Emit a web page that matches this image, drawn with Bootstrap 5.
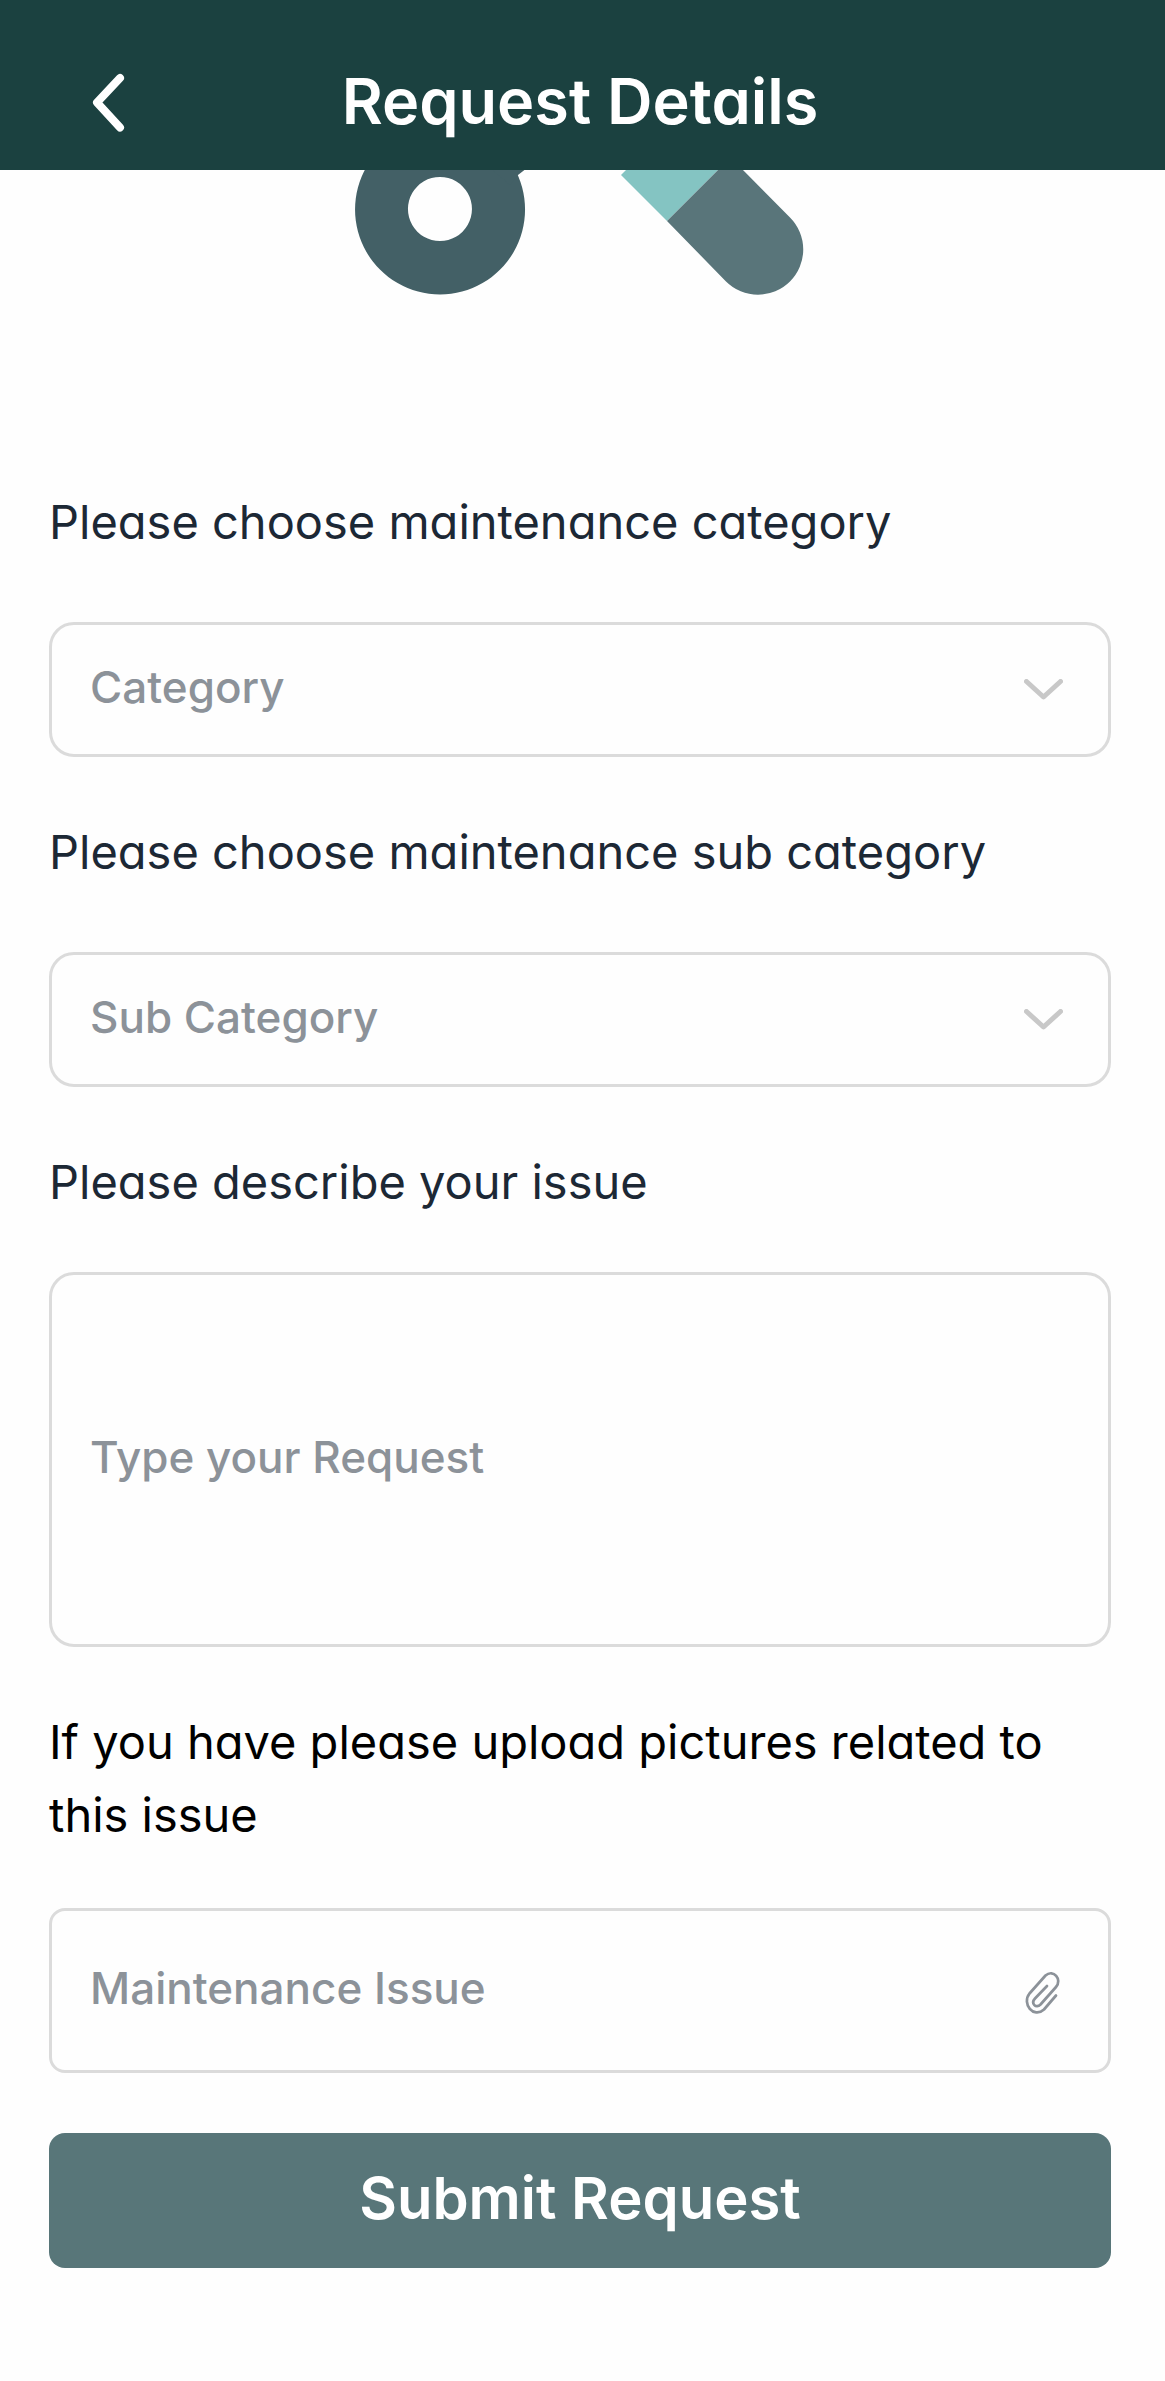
<!DOCTYPE html>
<html lang="en">
<head>
<meta charset="utf-8">
<meta name="viewport" content="width=device-width, initial-scale=1">
<title>Request Details</title>
<link href="https://cdn.jsdelivr.net/npm/bootstrap@5.3.0/dist/css/bootstrap.min.css" rel="stylesheet">
<style>
  body { font-family: Inter, "Open Sans", sans-serif; font-feature-settings: "cv11" 1; background: #fefefe; color: #1c2835; }
  .page-gutter { padding-left: 49px; padding-right: 54px; }
  .app-header { background: #1b4140; color: #fff; padding-top: 36px; padding-bottom: 4px; }
  .header-side { width: 120px; height: 130px; padding: 4px 0 0; }
  .header-title { font-size: 63px; line-height: 126px; font-weight: 600; }
  .illustration { margin-bottom: 190px; }
  .field-label { font-size: 47px; line-height: 73px; margin-bottom: 64px; }
  .label-describe { margin-bottom: 54px; }
  .label-upload { margin-bottom: 57px; color: #000; }
  .field-block { margin-bottom: 58px; }
  .field-box.form-control, .field-box.form-select {
    border: 3px solid #dbdbdb; border-radius: 25px; background: #fefefe;
    padding: 0 120px 6px 38px; height: 135px;
    font-size: 44px; line-height: 60px; font-weight: 500; color: #8c9299;
  }
  .field-box.form-control::placeholder { color: #8c9299; opacity: 1; }
  .field-box.request-text { height: 375px; padding-top: 152px; padding-right: 38px; resize: none; }
  .field-box.upload-text { height: 165px; border-radius: 16px; }
  .field-icon { right: 48px; pointer-events: none; }
  .clip-btn { right: 35px; }
  .submit-btn.btn { height: 135px; margin-top: 60px; border: 0; border-radius: 16px; background: #587679; color: #fff; font-size: 58px; line-height: 60px; font-weight: 600; padding: 0 0 6px; }
</style>
</head>
<body>
<header class="app-header page-gutter d-flex align-items-center justify-content-between">
  <button type="button" class="header-side btn border-0 d-flex align-items-center justify-content-center" aria-label="Back">
    <svg width="34" height="60" viewBox="0 0 34 60" fill="none" stroke="#fff" stroke-width="8" stroke-linecap="round" stroke-linejoin="round"><path d="M28 5 5 29.500 28 54.500"/></svg>
  </button>
  <h1 class="header-title m-0">Request Details</h1>
  <span class="header-side"></span>
</header>

<main class="page-gutter pb-5">
  <div class="illustration">
    <svg class="d-block mx-auto" width="450" height="125" viewBox="0 0 450 125" aria-hidden="true">
      <path fill="#436066" fill-rule="evenodd" d="M85-45.500a85 85 0 1 0 .1 0zM85 7a32 32 0 1 1-.1 0z"/>
      <path fill="#436066" d="M135-2h37l-9 7-8 10z"/>
      <path fill="#84c4c2" d="M266 5l7-7h92l-53 53z"/>
      <path fill="#59757a" d="M312 51l53-53h21L435 47.500A45 45 0 0 1 371 111.500z"/>
    </svg>
  </div>

  <form>
    <div class="field-block">
      <label class="field-label d-block" for="category">Please choose maintenance category</label>
      <div class="position-relative d-flex align-items-center">
        <select class="form-select field-box" id="category"><option>Category</option></select>
        <svg class="field-icon position-absolute" width="39" height="21" viewBox="0 0 39 21" fill="none" stroke="#c8c8c8" stroke-width="5" stroke-linecap="round" stroke-linejoin="round"><path d="M2.500 2.500 19.500 18 36.500 2.500"/></svg>
      </div>
    </div>
    <div class="field-block">
      <label class="field-label d-block" for="subcategory">Please choose maintenance sub category</label>
      <div class="position-relative d-flex align-items-center">
        <select class="form-select field-box" id="subcategory"><option>Sub Category</option></select>
        <svg class="field-icon position-absolute" width="39" height="21" viewBox="0 0 39 21" fill="none" stroke="#c8c8c8" stroke-width="5" stroke-linecap="round" stroke-linejoin="round"><path d="M2.500 2.500 19.500 18 36.500 2.500"/></svg>
      </div>
    </div>
    <div class="field-block">
      <label class="field-label label-describe d-block" for="request">Please describe your issue</label>
      <textarea class="form-control field-box request-text d-block" id="request" placeholder="Type your Request"></textarea>
    </div>
    <label class="field-label label-upload d-block" for="upload">If you have please upload pictures related to this issue</label>
    <div class="position-relative d-flex align-items-center">
      <input class="form-control field-box upload-text" id="upload" type="text" placeholder="Maintenance Issue">
      <button type="button" class="clip-btn btn border-0 position-absolute px-3 pt-2 pb-1" aria-label="Attach pictures">
        <svg class="d-block" width="35" height="44" viewBox="0 0 35 44" fill="none" stroke="#8c9299" stroke-width="2.700" stroke-linecap="round" stroke-linejoin="round"><path d="M22 15 10 27.500C5.500 32.500 11 38 15.500 33.500L31 16C37.500 8.500 28.500-2.500 20.500 4.500L4.500 22.500C-3.500 32.500 8.500 48 19 38.500L31 24.500"/></svg>
      </button>
    </div>
    <button type="submit" class="btn submit-btn w-100 d-block">Submit Request</button>
  </form>
</main>
<script src="https://cdn.jsdelivr.net/npm/bootstrap@5.3.0/dist/js/bootstrap.bundle.min.js"></script>
</body>
</html>
